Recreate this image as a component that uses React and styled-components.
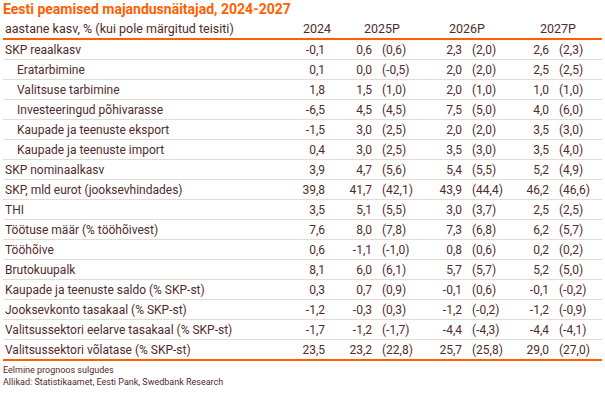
import React from 'react'
import styled, { createGlobalStyle } from 'styled-components'

const brown = '#512b2b'
const orange = '#ff5f00'

const GlobalStyle = createGlobalStyle`
  body {
    margin: 0;
    background: #fff;
    font-family: Roboto, "Liberation Sans", sans-serif;
    color: ${brown};
  }
`

const cols = '287px 54px 33px 43px 47px 47px 40px 48px'

const rows = [
  { label: 'SKP reaalkasv', v: ['-0,1', '0,6', '(0,6)', '2,3', '(2,0)', '2,6', '(2,3)'] },
  { label: 'Eratarbimine', sub: true, v: ['0,1', '0,0', '(-0,5)', '2,0', '(2,0)', '2,5', '(2,5)'] },
  { label: 'Valitsuse tarbimine', sub: true, v: ['1,8', '1,5', '(1,0)', '2,0', '(1,0)', '1,0', '(1,0)'] },
  { label: 'Investeeringud põhivarasse', sub: true, v: ['-6,5', '4,5', '(4,5)', '7,5', '(5,0)', '4,0', '(6,0)'] },
  { label: 'Kaupade ja teenuste eksport', sub: true, v: ['-1,5', '3,0', '(2,5)', '2,0', '(2,0)', '3,5', '(3,0)'] },
  { label: 'Kaupade ja teenuste import', sub: true, v: ['0,4', '3,0', '(2,5)', '3,5', '(3,0)', '3,5', '(4,0)'] },
  { label: 'SKP nominaalkasv', v: ['3,9', '4,7', '(5,6)', '5,4', '(5,5)', '5,2', '(4,9)'] },
  { label: 'SKP, mld eurot (jooksevhindades)', v: ['39,8', '41,7', '(42,1)', '43,9', '(44,4)', '46,2', '(46,6)'] },
  { label: 'THI', v: ['3,5', '5,1', '(5,5)', '3,0', '(3,7)', '2,5', '(2,5)'] },
  { label: 'Töötuse määr (% tööhõivest)', v: ['7,6', '8,0', '(7,8)', '7,3', '(6,8)', '6,2', '(5,7)'] },
  { label: 'Tööhõive', v: ['0,6', '-1,1', '(-1,0)', '0,8', '(0,6)', '0,2', '(0,2)'] },
  { label: 'Brutokuupalk', v: ['8,1', '6,0', '(6,1)', '5,7', '(5,7)', '5,2', '(5,0)'] },
  { label: 'Kaupade ja teenuste saldo (% SKP-st)', v: ['0,3', '0,7', '(0,9)', '-0,1', '(0,6)', '-0,1', '(-0,2)'] },
  { label: 'Jooksevkonto tasakaal (% SKP-st)', v: ['-1,2', '-0,3', '(0,3)', '-1,2', '(-0,2)', '-1,2', '(-0,9)'] },
  { label: 'Valitsussektori eelarve tasakaal (% SKP-st)', v: ['-1,7', '-1,2', '(-1,7)', '-4,4', '(-4,3)', '-4,4', '(-4,1)'] },
  { label: 'Valitsussektori võlatase (% SKP-st)', v: ['23,5', '23,2', '(22,8)', '25,7', '(25,8)', '29,0', '(27,0)'] },
]

const Page = styled.div`
  width: 599px;
  padding: 0 3px;
`

const Title = styled.h1`
  margin: 0;
  height: 19px;
  line-height: 19px;
  font-size: 14px;
  font-weight: 700;
  color: ${orange};
  white-space: nowrap;
`

const HeadRow = styled.div`
  display: grid;
  grid-template-columns: ${cols};
  height: 19px;
  align-items: center;
  font-size: 12.5px;
  border-bottom: 2px solid ${orange};
`

const Row = styled.div`
  display: grid;
  grid-template-columns: ${cols};
  height: 19px;
  align-items: center;
  font-size: 12px;
  border-bottom: ${p => (p.$last ? `2px solid ${orange}` : '1px solid #e4dbd8')};
`

const Label = styled.div`
  padding-left: ${p => (p.$sub ? '14px' : '2px')};
  white-space: nowrap;
`

const Year = styled.div`
  grid-column: span ${p => p.$span || 1};
  text-align: ${p => (p.$span ? 'center' : 'right')};
  padding-right: ${p => (p.$span ? '0' : '13px')};
`

const Num = styled.div`
  text-align: ${p => (p.$prior ? 'left' : 'right')};
  padding-left: ${p => (p.$prior ? '5px' : '0')};
  padding-right: ${p => (p.$prior ? '0' : p.$first ? '19px' : '5px')};
  white-space: nowrap;
`

const Notes = styled.div`
  padding-top: 3px;
  font-size: 9px;
  line-height: 12px;
`

export default function App() {
  return (
    <Page>
      <GlobalStyle />
      <Title>Eesti peamised majandusnäitajad, 2024-2027</Title>
      <HeadRow>
        <Label>aastane kasv, % (kui pole märgitud teisiti)</Label>
        <Year>2024</Year>
        <Year $span={2}>2025P</Year>
        <Year $span={2}>2026P</Year>
        <Year $span={2}>2027P</Year>
      </HeadRow>
      {rows.map((r, i) => (
        <Row key={r.label} $last={i === rows.length - 1}>
          <Label $sub={r.sub}>{r.label}</Label>
          {r.v.map((val, j) => (
            <Num key={j} $first={j === 0} $prior={j > 0 && j % 2 === 0}>{val}</Num>
          ))}
        </Row>
      ))}
      <Notes>
        <div>Eelmine prognoos sulgudes</div>
        <div>Allikad: Statistikaamet, Eesti Pank, Swedbank Research</div>
      </Notes>
    </Page>
  )
}
